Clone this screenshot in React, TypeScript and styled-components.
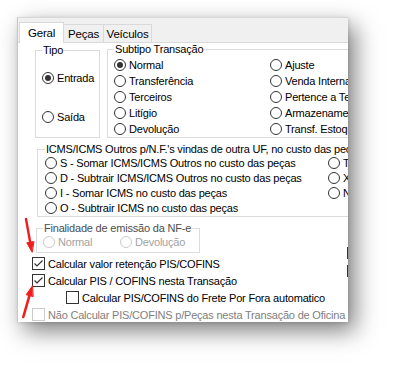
import styled, { createGlobalStyle } from "styled-components";

const GlobalStyle = createGlobalStyle`
  html, body {
    margin: 0;
    padding: 0;
    background: #fff;
  }
  body {
    font-family: "Liberation Sans", Arial, sans-serif;
    font-size: 11px;
    letter-spacing: -0.2px;
    color: #000;
  }
`;

const Screen = styled.div`
  position: relative;
  width: 396px;
  height: 370px;
  box-sizing: border-box;
  padding: 17px 0 0 17px;
  overflow: hidden;
  background: #fff;
`;

const Window = styled.div`
  position: relative;
  width: 331px;
  height: 305px;
  box-sizing: border-box;
  border-left: 1px solid #c8c8c8;
  border-top: 1px solid #d8d8d8;
  background: #fff;
  overflow: hidden;
  box-shadow: 7px 9px 22px rgba(0, 0, 0, 0.5), 1px 1px 4px rgba(0, 0, 0, 0.12);
`;

const TabStrip = styled.div`
  display: flex;
  align-items: flex-end;
  height: 24px;
  padding-left: 1px;
  background: #f0f0f0;
  border-bottom: 1px solid #d9d9d9;
`;

const Tab = styled.div<{ $width: number; $active?: boolean }>`
  display: flex;
  align-items: center;
  justify-content: center;
  width: ${(p) => p.$width}px;
  height: ${(p) => (p.$active ? 21 : 18)}px;
  box-sizing: border-box;
  margin-bottom: ${(p) => (p.$active ? -1 : 0)}px;
  border: 1px solid #d9d9d9;
  border-bottom: none;
  background: ${(p) => (p.$active ? "#fff" : "#f0f0f0")};
  font-size: 11.5px;
  z-index: ${(p) => (p.$active ? 1 : 0)};

  & + & {
    border-left: none;
  }
`;

const Page = styled.div`
  display: flex;
  flex-direction: column;
  width: 420px;
  padding-left: 14px;
`;

const TopRow = styled.div`
  display: flex;
  gap: 7px;
  margin-left: 3px;
`;

const Group = styled.fieldset<{ $width: number }>`
  box-sizing: border-box;
  width: ${(p) => p.$width}px;
  min-width: 0;
  margin: 0;
  padding: 0 6px;
  border: 1px solid #dcdcdc;
`;

const Legend = styled.legend<{ $disabled?: boolean }>`
  padding: 0 1px;
  line-height: 12px;
  white-space: nowrap;
  color: ${(p) => (p.$disabled ? "#4d4d4d" : "#000")};
`;

const TipoGroup = styled(Group)`
  display: flex;
  flex-direction: column;
  gap: 23px;
  margin-top: 1px;
  padding-top: 14px;
`;

const SubtipoGroup = styled(Group)`
  display: grid;
  grid-template-columns: 156px 1fr;
  grid-auto-flow: column;
  grid-template-rows: repeat(5, 16px);
  padding-top: 2px;
`;

const IcmsGroup = styled(Group)`
  display: grid;
  grid-template-columns: 283px 1fr;
  grid-auto-flow: column;
  grid-template-rows: repeat(4, 15px);
  margin: 5px 0 0 5px;
  padding: 0 7px 1px;
`;

const FinalidadeGroup = styled(Group)`
  display: flex;
  margin: 5px 0 0 4px;
  padding: 0 6px 3px;
`;

const RadioOption = styled.label<{ $height: number; $width?: number; $disabled?: boolean }>`
  display: flex;
  align-items: center;
  gap: 3px;
  height: ${(p) => p.$height}px;
  width: ${(p) => (p.$width ? `${p.$width}px` : "auto")};
  white-space: nowrap;
  color: ${(p) => (p.$disabled ? "#a3a3a3" : "#000")};
`;

const RadioCircle = styled.span<{ $checked?: boolean; $disabled?: boolean }>`
  display: inline-flex;
  align-items: center;
  justify-content: center;
  flex: none;
  width: 12px;
  height: 12px;
  box-sizing: border-box;
  border-radius: 50%;
  border: 1px solid ${(p) => (p.$disabled ? "#cccccc" : "#333")};
  background: #fff;

  &::after {
    content: "";
    display: ${(p) => (p.$checked ? "block" : "none")};
    width: 6px;
    height: 6px;
    border-radius: 50%;
    background: #333;
  }
`;

const CheckList = styled.div`
  display: flex;
  flex-direction: column;
  margin-top: 2px;
`;

const CheckOption = styled.label<{ $indent?: number; $disabled?: boolean }>`
  display: flex;
  align-items: center;
  gap: 3px;
  height: 17px;
  padding-left: ${(p) => p.$indent ?? 0}px;
  white-space: nowrap;
  color: ${(p) => (p.$disabled ? "#808080" : "#000")};
`;

const CheckBox = styled.span<{ $disabled?: boolean }>`
  display: inline-flex;
  align-items: center;
  justify-content: center;
  flex: none;
  width: 13px;
  height: 13px;
  box-sizing: border-box;
  border: 1px solid ${(p) => (p.$disabled ? "#cccccc" : "#333")};
  background: #fff;
`;

// bits of a control cut off by the window's right edge
const EdgeMark = styled.span<{ $top: number }>`
  position: absolute;
  right: 0;
  top: ${(p) => p.$top}px;
  width: 1px;
  height: 12px;
  background: #333;
`;

const Overlay = styled.svg`
  position: absolute;
  left: 0;
  top: 0;
  pointer-events: none;
`;

type RadioProps = {
  label: string;
  height: number;
  width?: number;
  checked?: boolean;
  disabled?: boolean;
};

const Radio = ({ label, height, width, checked, disabled }: RadioProps) => (
  <RadioOption $height={height} $width={width} $disabled={disabled}>
    <RadioCircle $checked={checked} $disabled={disabled} />
    {label}
  </RadioOption>
);

type CheckProps = {
  label: string;
  checked?: boolean;
  disabled?: boolean;
  indent?: number;
};

const Check = ({ label, checked, disabled, indent }: CheckProps) => (
  <CheckOption $indent={indent} $disabled={disabled}>
    <CheckBox $disabled={disabled}>
      {checked && (
        <svg width="11" height="11" viewBox="0 0 11 11">
          <polyline points="1.5,5.5 4,8 9.5,2.5" fill="none" stroke="#333" strokeWidth="1.2" />
        </svg>
      )}
    </CheckBox>
    {label}
  </CheckOption>
);

const subtipos = [
  { label: "Normal", checked: true },
  { label: "Transferência" },
  { label: "Terceiros" },
  { label: "Litígio" },
  { label: "Devolução" },
  { label: "Ajuste" },
  { label: "Venda Interna" },
  { label: "Pertence a Terceiros" },
  { label: "Armazenamento" },
  { label: "Transf. Estoque" },
];

const icmsOptions = [
  "S - Somar ICMS/ICMS Outros no custo das peças",
  "D - Subtrair ICMS/ICMS Outros no custo das peças",
  "I - Somar ICMS no custo das peças",
  "O - Subtrair ICMS no custo das peças",
  "T - Tributar",
  "X - Isento",
  "N - Nenhum",
];

export default function App() {
  return (
    <>
      <GlobalStyle />
      <Screen>
        <Window>
          <TabStrip>
            <Tab $width={45} $active>
              Geral
            </Tab>
            <Tab $width={40}>Peças</Tab>
            <Tab $width={48}>Veículos</Tab>
          </TabStrip>

          <Page>
            <TopRow>
              <TipoGroup $width={65}>
                <Legend>Tipo</Legend>
                <Radio label="Entrada" height={16} checked />
                <Radio label="Saída" height={16} />
              </TipoGroup>
              <SubtipoGroup $width={300}>
                <Legend>Subtipo Transação</Legend>
                {subtipos.map((s) => (
                  <Radio key={s.label} label={s.label} height={16} checked={s.checked} />
                ))}
              </SubtipoGroup>
            </TopRow>

            <IcmsGroup $width={400}>
              <Legend>ICMS/ICMS Outros p/N.F.'s vindas de outra UF, no custo das peças</Legend>
              {icmsOptions.map((o) => (
                <Radio key={o} label={o} height={15} />
              ))}
            </IcmsGroup>

            <FinalidadeGroup $width={164}>
              <Legend $disabled>Finalidade de emissão da NF-e</Legend>
              <Radio label="Normal" height={15} width={77} disabled />
              <Radio label="Devolução" height={15} disabled />
            </FinalidadeGroup>

            <CheckList>
              <Check label="Calcular valor retenção PIS/COFINS" checked />
              <Check label="Calcular PIS / COFINS nesta Transação" checked />
              <Check label="Calcular PIS/COFINS do Frete Por Fora automatico" indent={34} />
              <Check label="Não Calcular PIS/COFINS p/Peças nesta Transação de Oficina" disabled />
            </CheckList>
          </Page>

          <EdgeMark $top={229} />
          <EdgeMark $top={247} />
        </Window>

        <Overlay width="396" height="370" viewBox="0 0 396 370">
          <g fill="#f01d1d" stroke="#f01d1d" strokeLinecap="round">
            <line x1="26" y1="219" x2="30.3" y2="243" strokeWidth="2.4" />
            <polygon points="32,252 26.8,242.8 33.6,241.6" strokeWidth="1" />
            <line x1="23.3" y1="317" x2="29.6" y2="295" strokeWidth="2.6" />
            <polygon points="32.3,286 26.2,294.7 32.8,296.5" strokeWidth="1" />
          </g>
        </Overlay>
      </Screen>
    </>
  );
}
